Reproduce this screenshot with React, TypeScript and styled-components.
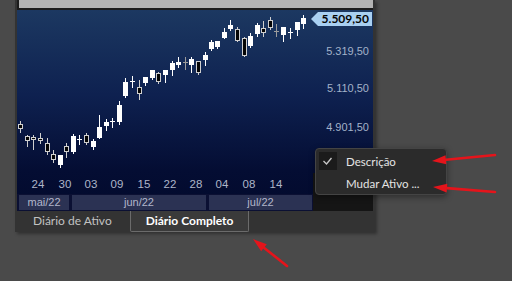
import React from 'react';
import styled, { createGlobalStyle } from 'styled-components';

const GlobalStyle = createGlobalStyle`
  html, body {
    margin: 0;
    padding: 0;
    background: #4a4a4a;
  }
  body {
    font-family: Lato, 'Liberation Sans', sans-serif;
  }
`;

const Page = styled.div`
  position: relative;
  width: 512px;
  height: 281px;
  padding-left: 15px;
  box-sizing: border-box;
  overflow: hidden;
`;

const Panel = styled.div`
  width: 360px;
  padding: 0 2px;
  box-sizing: border-box;
  background: #333333;
  box-shadow: 2px 2px 3px rgba(0, 0, 0, 0.35);
`;

const Header = styled.div`
  height: 10px;
  padding: 0 0 2px 2px;
  box-sizing: border-box;
  background: #1c1c1c;
`;

const HeaderBar = styled.div`
  height: 8px;
  background: #b3b3b3;
`;

const ChartBody = styled.div`
  display: grid;
  grid-template-columns: 296px 1fr;
  grid-template-rows: 163px 21px 17px;
  background: linear-gradient(180deg, #1c3861 0%, #0e2150 42%, #040d33 80%, #020a2c 100%);
`;

const Plot = styled.svg`
  grid-column: 1;
  grid-row: 1 / 3;
  display: block;
`;

const PriceAxis = styled.div`
  grid-column: 2;
  grid-row: 1;
  position: relative;
  font-family: 'Liberation Sans', Arial, sans-serif;
`;

const PriceLabel = styled.div`
  position: absolute;
  right: 4px;
  font-size: 11px;
  line-height: 14px;
  color: #a3b2c9;
`;

const PriceTag = styled.div`
  position: absolute;
  right: 1px;
  height: 14px;
  padding: 0 3px 0 4px;
  background: #a9d0f2;
  color: #050505;
  font-family: Lato, sans-serif;
  font-weight: 700;
  font-size: 12px;
  line-height: 14px;

  &::before {
    content: '';
    position: absolute;
    left: -7px;
    top: 0;
    border-top: 7px solid transparent;
    border-bottom: 7px solid transparent;
    border-right: 7px solid #a9d0f2;
  }
`;

const Corner = styled.div`
  grid-column: 2;
  grid-row: 2 / 4;
  background: #151515;
`;

const MonthRow = styled.div`
  grid-column: 1;
  grid-row: 3;
  display: flex;
  gap: 3px;
  padding: 1px 1px 1px 2px;
  background: #0b1033;
`;

const MonthBox = styled.div<{ $w: number }>`
  width: ${(p) => p.$w}px;
  background: #2b3253;
  color: #b2b6cb;
  font-family: 'Liberation Sans', Arial, sans-serif;
  font-size: 11px;
  line-height: 15px;
  text-align: center;
`;

const TabRow = styled.div`
  display: flex;
  gap: 2px;
  height: 21px;
`;

const Tab = styled.div<{ $active?: boolean }>`
  padding: 0 15px;
  height: 20px;
  line-height: 19px;
  font-size: 12px;
  border: 1px solid ${(p) => (p.$active ? '#6b6b6b' : 'transparent')};
  border-top: none;
  border-radius: 0 0 2px 2px;
  background: ${(p) => (p.$active ? '#3a3a3a' : 'transparent')};
  color: ${(p) => (p.$active ? '#ffffff' : '#c2c2c2')};
  font-weight: ${(p) => (p.$active ? 700 : 400)};
`;

const Menu = styled.div`
  position: absolute;
  left: 315px;
  top: 148px;
  width: 132px;
  box-sizing: border-box;
  padding: 1px 3px 0;
  background: #2b2b2b;
  border: 1px solid #444444;
  border-radius: 4px;
  box-shadow: 0 2px 6px rgba(0, 0, 0, 0.4);
`;

const MenuItem = styled.div`
  display: flex;
  align-items: center;
  gap: 9px;
  height: 22px;
  font-size: 11.5px;
  color: #e4e4e4;
`;

const CheckCell = styled.div<{ $checked?: boolean }>`
  width: 18px;
  height: 18px;
  display: grid;
  place-items: center;
  background: ${(p) => (p.$checked ? '#1b1b1b' : 'transparent')};
`;

const Overlay = styled.svg`
  position: absolute;
  left: 0;
  top: 0;
  pointer-events: none;
`;

type Kind = 'w' | 'b' | 'd' | 'g';
// x, body top, body bottom, high, low, kind
const candles: [number, number, number, number, number, Kind][] = [
  [20, 124, 129, 121, 133, 'b'],
  [27, 136, 141, 135, 147, 'b'],
  [33, 137, 140, 135, 150, 'b'],
  [40, 138, 141, 133, 144, 'b'],
  [47, 143, 152, 138, 155, 'b'],
  [53, 154, 160, 150, 163, 'b'],
  [60, 155, 165, 155, 168, 'w'],
  [66, 146, 152, 143, 158, 'b'],
  [73, 136, 152, 134, 154, 'w'],
  [79, 139, 139, 135, 145, 'd'],
  [86, 135, 143, 133, 145, 'b'],
  [93, 141, 147, 139, 150, 'w'],
  [99, 127, 138, 115, 139, 'w'],
  [106, 122, 126, 119, 131, 'w'],
  [112, 121, 121, 118, 128, 'd'],
  [119, 105, 122, 101, 125, 'w'],
  [125, 82, 96, 78, 98, 'w'],
  [132, 81, 81, 76, 88, 'd'],
  [139, 87, 94, 80, 100, 'b'],
  [145, 77, 83, 77, 86, 'w'],
  [152, 70, 78, 70, 80, 'w'],
  [158, 73, 82, 72, 84, 'b'],
  [165, 70, 75, 70, 83, 'w'],
  [172, 63, 70, 61, 76, 'w'],
  [178, 62, 65, 57, 68, 'w'],
  [185, 62, 62, 57, 70, 'g'],
  [191, 59, 65, 57, 73, 'w'],
  [198, 61, 73, 61, 75, 'b'],
  [205, 55, 60, 52, 66, 'w'],
  [211, 42, 49, 40, 51, 'w'],
  [217, 41, 47, 41, 49, 'w'],
  [224, 32, 38, 28, 39, 'w'],
  [230, 25, 29, 20, 31, 'w'],
  [237, 29, 41, 27, 42, 'b'],
  [244, 38, 56, 37, 57, 'b'],
  [250, 36, 46, 33, 48, 'w'],
  [257, 25, 34, 23, 37, 'w'],
  [263, 28, 33, 21, 37, 'b'],
  [270, 20, 28, 17, 30, 'b'],
  [276, 31, 31, 24, 37, 'g'],
  [283, 27, 35, 27, 42, 'w'],
  [290, 32, 32, 28, 39, 'd'],
  [297, 22, 30, 22, 36, 'w'],
  [303, 18, 24, 15, 29, 'w'],
];

const dates: [string, number][] = [
  ['24', 38], ['30', 65], ['03', 91], ['09', 117], ['15', 144],
  ['22', 170], ['28', 196], ['04', 222], ['08', 249], ['14', 276],
];

const prices: [string, number][] = [
  ['5.319,50', 51],
  ['5.110,50', 88],
  ['4.901,50', 127],
];

const months: [string, number][] = [
  ['mai/22', 50],
  ['jun/22', 134],
  ['jul/22', 103],
];

const Candle = ({ c }: { c: [number, number, number, number, number, Kind] }) => {
  const [x, top, bottom, hi, lo, kind] = c;
  const wick = kind === 'g' ? '#9c9c9c' : kind === 'b' ? '#cfcfcf' : '#ffffff';
  return (
    <g>
      <line x1={x + 0.5} x2={x + 0.5} y1={hi} y2={lo} stroke={wick} strokeWidth={1} />
      {kind === 'w' && <rect x={x - 2} y={top} width={5} height={Math.max(1, bottom - top)} fill="#ffffff" />}
      {kind === 'b' && (
        <rect x={x - 1.5} y={top + 0.5} width={4} height={Math.max(1, bottom - top - 1)} fill="#050505" stroke="#cfcfcf" strokeWidth={1} />
      )}
      {(kind === 'd' || kind === 'g') && (
        <line x1={x - 2} x2={x + 3} y1={top + 0.5} y2={top + 0.5} stroke={wick} strokeWidth={1} />
      )}
    </g>
  );
};

const Arrow = ({ x1, y1, x2, y2 }: { x1: number; y1: number; x2: number; y2: number }) => {
  const dx = x2 - x1;
  const dy = y2 - y1;
  const len = Math.hypot(dx, dy);
  const ux = dx / len;
  const uy = dy / len;
  const bx = x2 - ux * 14;
  const by = y2 - uy * 14;
  const px = -uy * 4.5;
  const py = ux * 4.5;
  return (
    <g>
      <line x1={x1} y1={y1} x2={bx} y2={by} stroke="#e5141b" strokeWidth={2.6} strokeLinecap="round" />
      <polygon points={`${x2},${y2} ${bx + px},${by + py} ${bx - px},${by - py}`} fill="#e5141b" />
    </g>
  );
};

const App = () => (
  <Page>
    <GlobalStyle />
    <Panel>
      <Header>
        <HeaderBar />
      </Header>
      <ChartBody>
        <Plot width={296} height={184} viewBox="17 10 296 184" shapeRendering="crispEdges">
          {candles.map((c, i) => <Candle c={c} key={+i} />)}
          {dates.map(([d, x]) => (
            <text
              key={d}
              x={x}
              y={188}
              textAnchor="middle"
              fontFamily="'Liberation Sans', Arial, sans-serif"
              fontSize={11.5}
              fill="#aeb6c9"
            >
              {d}
            </text>
          ))}
        </Plot>
        <PriceAxis>
          <PriceTag style={{ top: 2 }}>5.509,50</PriceTag>
          {prices.map(([p, y]) => (
            <PriceLabel key={p} style={{ top: y - 10 - 7 }}>{p}</PriceLabel>
          ))}
        </PriceAxis>
        <Corner />
        <MonthRow>
          {months.map(([m, w]) => <MonthBox $w={w} key={m}>{m}</MonthBox>)}
        </MonthRow>
      </ChartBody>
      <TabRow>
        <Tab>Diário de Ativo</Tab>
        <Tab $active>Diário Completo</Tab>
      </TabRow>
    </Panel>

    <Menu>
      <MenuItem>
        <CheckCell $checked>
          <svg width="18" height="18" viewBox="0 0 18 18">
            <polyline points="4.5,9 7.5,12 12.5,6" fill="none" stroke="#c8c8c8" strokeWidth="1.3" />
          </svg>
        </CheckCell>
        Descrição
      </MenuItem>
      <MenuItem>
        <CheckCell />
        Mudar Ativo ...
      </MenuItem>
    </Menu>

    <Overlay width={512} height={281}>
      <Arrow x1={495} y1={155} x2={432} y2={161} />
      <Arrow x1={495} y1={192} x2={433} y2={187} />
      <Arrow x1={287} y1={266} x2={253} y2={239} />
    </Overlay>
  </Page>
);

export default App;
